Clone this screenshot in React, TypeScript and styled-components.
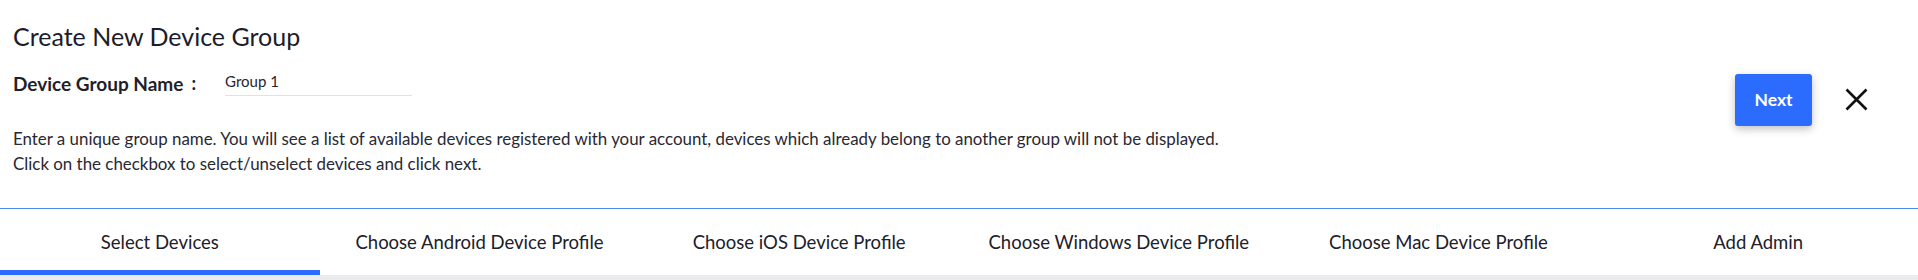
import { createGlobalStyle, styled } from "styled-components";

const GlobalStyle = createGlobalStyle`
  html, body {
    margin: 0;
    padding: 0;
    background: #fff;
  }
  body {
    font-family: Lato, "Noto Sans", sans-serif;
    color: #1e1e2c;
  }
`;

const Page = styled.div`
  width: 100%;
`;

const Header = styled.div`
  height: 209px;
  box-sizing: border-box;
  display: flex;
  align-items: center;
  justify-content: space-between;
  padding: 0 50px 0 13px;
  border-bottom: 1px solid #4d8af6;
`;

const Left = styled.div`
  display: flex;
  flex-direction: column;
  align-self: flex-start;
  padding-top: 20px;
`;

const Title = styled.h1`
  margin: 0;
  font-size: 25px;
  font-weight: 400;
  line-height: 32px;
  color: #1c1c2a;
`;

const NameRow = styled.div`
  display: flex;
  align-items: center;
  margin-top: 18px;
`;

const Label = styled.label`
  font-size: 19px;
  font-weight: 700;
  color: #1f1f2b;
`;

const Colon = styled.span`
  font-size: 18px;
  font-weight: 700;
  margin-left: 8px;
  margin-right: 29px;
`;

const NameInput = styled.input`
  width: 187px;
  border: none;
  border-bottom: 1px solid #e2e2e6;
  outline: none;
  padding: 2px 0 5px;
  font-family: Lato, sans-serif;
  font-size: 15px;
  color: #262630;
  background: transparent;
`;

const Hint = styled.p`
  margin: 30px 0 0;
  font-size: 16.9px;
  line-height: 25px;
  color: #282832;
`;

const Actions = styled.div`
  display: flex;
  align-items: center;
  gap: 32px;
  margin-top: -9px;
`;

const NextButton = styled.button`
  width: 77px;
  height: 52px;
  border: none;
  border-radius: 3px;
  background: #2b6cff;
  color: #fff;
  font-family: Lato, sans-serif;
  font-size: 17.5px;
  font-weight: 700;
  box-shadow: 0 3px 8px rgba(0, 0, 0, 0.25);
  cursor: pointer;
`;

const CloseButton = styled.button`
  width: 24px;
  height: 24px;
  padding: 0;
  border: none;
  background: none;
  display: flex;
  align-items: center;
  justify-content: center;
  cursor: pointer;
`;

const TabBar = styled.div`
  display: grid;
  grid-template-columns: repeat(6, 1fr);
  border-bottom: 5px solid #ebebee;
`;

const Tab = styled.div<{ $active?: boolean }>`
  height: 66px;
  box-sizing: border-box;
  display: flex;
  align-items: center;
  justify-content: center;
  padding-top: 5px;
  font-size: 18.5px;
  color: #20202a;
  border-bottom: 5px solid ${(p) => (p.$active ? "#2b6cff" : "transparent")};
`;

const tabs = [
  "Select Devices",
  "Choose Android Device Profile",
  "Choose iOS Device Profile",
  "Choose Windows Device Profile",
  "Choose Mac Device Profile",
  "Add Admin",
];

function App() {
  return (
    <Page>
      <GlobalStyle />
      <Header>
        <Left>
          <Title>Create New Device Group</Title>
          <NameRow>
            <Label>Device Group Name</Label>
            <Colon>:</Colon>
            <NameInput defaultValue="Group 1" />
          </NameRow>
          <Hint>
            Enter a unique group name. You will see a list of available devices registered with your account, devices which already belong to another group will not be displayed.
            <br />
            Click on the checkbox to select/unselect devices and click next.
          </Hint>
        </Left>
        <Actions>
          <NextButton>Next</NextButton>
          <CloseButton aria-label="close">
            <svg width="23" height="23" viewBox="0 0 23 23">
              <path d="M1.5 1.5 L21.5 21.5 M21.5 1.5 L1.5 21.5" stroke="#111" strokeWidth="2.6" />
            </svg>
          </CloseButton>
        </Actions>
      </Header>
      <TabBar>
        {tabs.map((t, i) => (
          <Tab key={t} $active={i === 0}>
            {t}
          </Tab>
        ))}
      </TabBar>
    </Page>
  );
}

export default App;
